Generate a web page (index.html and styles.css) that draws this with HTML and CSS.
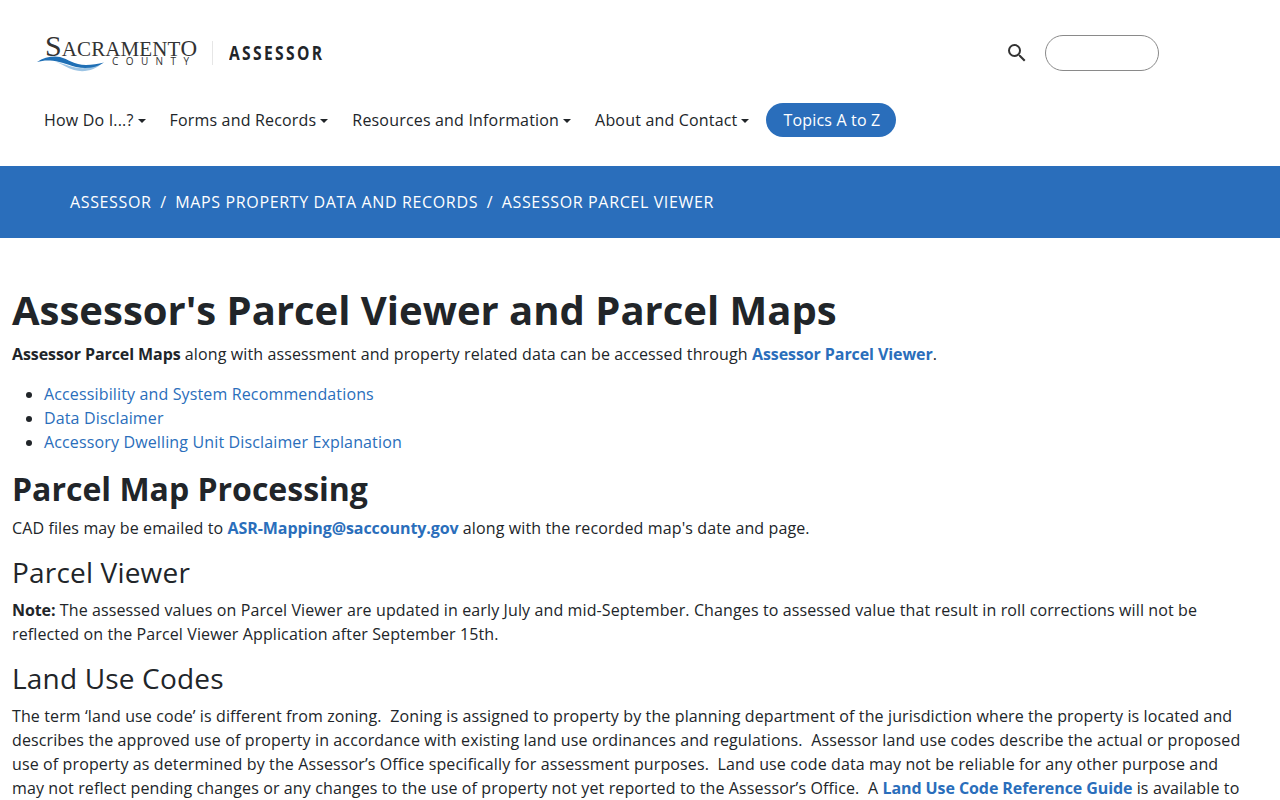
FILE: index.html
```html
<!DOCTYPE html>
<html lang="en">

<head>
    <meta charset="utf-8">
    <meta name="viewport" content="width=device-width, initial-scale=1.0">
    <title>Assessor's Parcel Viewer and Parcel Maps</title>
    <link rel="stylesheet" href="styles.css">
</head>

<body>
    <header class="site-header">
        <div class="top-row">
            <a class="logo" href="#">
                <span class="logo-mark">
                    <span class="logo-name"><span class="logo-big">S</span>ACRAMENT<span class="logo-o">O</span></span>
                    <svg class="logo-swoosh" width="72" height="24" viewBox="0 0 72 24">
                        <path d="M20 12 C30 14 38 19 50 18 C56 17.600 62 15 66 13 C60 20 48 23 38 20 C31 18 26 14 20 12Z" fill="#9cc4e4"/>
                        <path d="M1 12 C8 7 18 5.500 24 7 C32 9 38 15 50 15 C56 15 62 14 68 12.500 C60 18 50 19 40 17 C30 14 22 11 14 10.500 C9 10.200 5 11 1 12Z" fill="#1f6fb5"/>
                    </svg>
                    <span class="logo-county">COUNTY</span>
                </span>
                <span class="logo-dept">ASSESSOR</span>
            </a>
            <div class="search">
                <svg width="24" height="24" viewBox="0 0 24 24"><path fill="#333" d="M15.5 14h-.79l-.28-.27A6.47 6.47 0 0 0 16 9.5 6.5 6.5 0 1 0 9.5 16c1.61 0 3.09-.59 4.23-1.57l.27.28v.79l5 4.99L20.49 19l-4.99-5zm-6 0C7.01 14 5 11.99 5 9.5S7.01 5 9.5 5 14 7.01 14 9.5 11.99 14 9.500 14z"/></svg>
                <input class="search-box" type="text" aria-label="Search">
            </div>
        </div>
        <nav class="main-nav">
            <a class="nav-link" href="#">How Do I...?</a>
            <a class="nav-link" href="#">Forms and Records</a>
            <a class="nav-link" href="#">Resources and Information</a>
            <a class="nav-link" href="#">About and Contact</a>
            <a class="nav-pill" href="#">Topics A to Z</a>
        </nav>
    </header>

    <div class="crumbs">
        <a href="#">ASSESSOR</a>
        <span>/</span>
        <a href="#">MAPS PROPERTY DATA AND RECORDS</a>
        <span>/</span>
        <a href="#">ASSESSOR PARCEL VIEWER</a>
    </div>

    <main class="content">
        <h1>Assessor's Parcel Viewer and Parcel Maps</h1>
        <p><strong>Assessor Parcel Maps</strong> along with assessment and property related data can be accessed through <a class="strong-link" href="#">Assessor Parcel Viewer</a>.</p>
        <ul>
            <li><a href="#">Accessibility and System Recommendations</a></li>
            <li><a href="#">Data Disclaimer</a></li>
            <li><a href="#">Accessory Dwelling Unit Disclaimer Explanation</a></li>
        </ul>
        <h2>Parcel Map Processing</h2>
        <p>CAD files may be emailed to <a class="strong-link" href="#">ASR-Mapping@saccounty.gov</a> along with the recorded map's date and page.</p>
        <h3>Parcel Viewer</h3>
        <p><strong>Note:</strong> The assessed values on Parcel Viewer are updated in early July and mid-September. Changes to assessed value that result in roll corrections will not be reflected on the Parcel Viewer Application after September 15th.</p>
        <h3>Land Use Codes</h3>
        <p>The term ‘land use code’ is different from zoning.&nbsp; Zoning is assigned to property by the planning department of the jurisdiction where the property is located and describes the approved use of property in accordance with existing land use ordinances and regulations.&nbsp; Assessor land use codes describe the actual or proposed use of property as determined by the Assessor’s Office specifically for assessment purposes.&nbsp; Land use code data may not be reliable for any other purpose and may not reflect pending changes or any changes to the use of property not yet reported to the Assessor’s Office.&nbsp; A <a class="strong-link" href="#">Land Use Code Reference Guide</a> is available to</p>
    </main>
</body>

</html>
```

FILE: styles.css
```css
* {
    box-sizing: border-box;
}

html {
    overflow: hidden;
    height: 800px;
}

body {
    margin: 0;
    font-family: "Open Sans", sans-serif;
    font-size: 16px;
    line-height: 24px;
    letter-spacing: 0.12px;
    color: #212529;
    background-color: #fff;
}

a {
    color: #2a6ebb;
    text-decoration: none;
}

/* header */
.site-header {
    height: 166px;
    padding: 0 32px;
}

.top-row {
    display: flex;
    justify-content: space-between;
    align-items: center;
    height: 105px;
    padding-right: 89px;
}

.logo {
    display: flex;
    align-items: center;
    color: #212529;
}

.logo-mark {
    position: relative;
    display: block;
    width: 181px;
    height: 24px;
    border-right: 1px solid #e6e6e6;
}

.logo-swoosh {
    position: absolute;
    left: 4px;
    top: 9px;
}

.logo-name {
    position: absolute;
    left: 13px;
    top: -7px;
    font-family: "Liberation Serif", serif;
    font-size: 21px;
    line-height: 24px;
    letter-spacing: 0.1px;
    color: #333;
    white-space: nowrap;
}

.logo-big {
    font-size: 30px;
}

.logo-o {
    font-size: 23px;
}

.logo-county {
    position: absolute;
    left: 80px;
    top: 14px;
    font-size: 10px;
    line-height: 12px;
    letter-spacing: 7.4px;
    color: #333;
}

.logo-dept {
    margin-left: 16px;
    font-size: 20px;
    font-weight: 700;
    letter-spacing: 3px;
    transform: scaleX(0.78);
    transform-origin: left center;
}

.search {
    display: flex;
    align-items: center;
    gap: 16px;
}

.search-box {
    width: 114px;
    height: 36px;
    border: 1px solid #8a8a8a;
    border-radius: 18px;
    background: #fff;
}

.main-nav {
    display: flex;
    align-items: center;
    margin-top: -2px;
    letter-spacing: 0.18px;
}

.nav-link {
    padding: 5px 12px;
    color: #212529;
}

.nav-link::after {
    content: "";
    display: inline-block;
    margin-left: 4px;
    vertical-align: 3px;
    border-top: 4.8px solid #212529;
    border-left: 4.8px solid transparent;
    border-right: 4.8px solid transparent;
}

.nav-pill {
    margin-left: 5px;
    padding: 5px 16px 5px 17px;
    border-radius: 17px;
    color: #fff;
    background-color: #2a6ebb;
}

/* breadcrumb */
.crumbs {
    display: flex;
    align-items: center;
    gap: 8.6px;
    height: 72px;
    padding-left: 70px;
    letter-spacing: 0.64px;
    background-color: #2a6ebb;
    color: #fff;
}

.crumbs a {
    color: #fff;
}

/* content */
.content {
    padding: 48px 30px 0 12px;
}

h1,
h2,
h3 {
    margin: 0 0 8px;
    line-height: 1.2;
    letter-spacing: 0;
}

h1 {
    font-size: 40px;
    font-weight: 700;
}

h2 {
    font-size: 32px;
    font-weight: 700;
}

h3 {
    font-size: 28px;
    font-weight: 400;
    letter-spacing: 0.18px;
}

p {
    margin: 0 0 16px;
}

ul {
    margin: 0 0 16px;
    padding-left: 32px;
    letter-spacing: 0.14px;
}

strong,
.strong-link {
    font-weight: 700;
    letter-spacing: -0.08px;
}
```
